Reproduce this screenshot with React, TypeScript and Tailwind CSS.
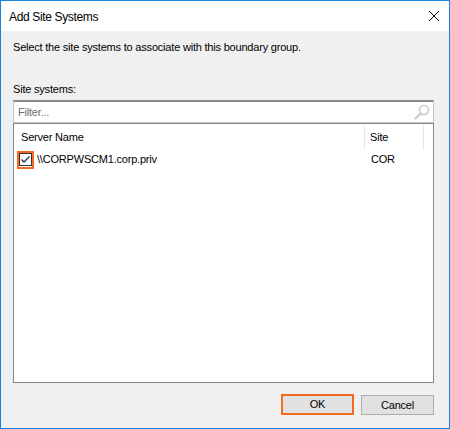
import React from 'react';

const ui = { fontFamily: '"Liberation Sans", Arial, sans-serif' };

const SearchGlyph = () => (
  <svg width="16" height="16" viewBox="0 0 16 16" className="shrink-0">
    <circle cx="10" cy="6" r="4.5" fill="none" stroke="#c8c8c8" strokeWidth="1.5" />
    <line x1="6.7" y1="9.3" x2="1.5" y2="14.5" stroke="#c8c8c8" strokeWidth="2" strokeLinecap="round" />
  </svg>
);

const CloseGlyph = () => (
  <svg width="12" height="12" viewBox="0 0 12 12">
    <path d="M1 1 L11 11 M11 1 L1 11" stroke="#000" strokeWidth="1" fill="none" />
  </svg>
);

export default function App() {
  return (
    <div
      style={ui}
      className="w-[450px] h-[429px] border border-[#1883d7] bg-[#f0f0f0] flex flex-col text-[11px] tracking-[-0.2px] text-black"
    >
      {/* title bar */}
      <div className="h-[30px] bg-white flex items-center justify-between pl-[8px] pr-[9px]">
        <span className="text-[12px] tracking-[-0.35px] leading-none pt-[1px]">Add Site Systems</span>
        <CloseGlyph />
      </div>

      <div className="flex-1 flex flex-col pl-[12px] pr-[15px]">
        <p className="mt-[10px] leading-[13px]">Select the site systems to associate with this boundary group.</p>

        <p className="mt-[29px] leading-[13px]">Site systems:</p>

        {/* filter */}
        <div className="mt-[4px] h-[23px] bg-white border border-[#c4c4c4] border-t-[#8c8c8c] border-t-2 flex items-center pl-[4px] pr-[3px]">
          <span className="flex-1 text-[#6d6d6d]">Filter...</span>
          <SearchGlyph />
        </div>

        {/* list */}
        <div className="h-[260px] bg-white border border-[#828790] flex flex-col">
          <div className="h-[25px] mt-[1px] flex items-stretch">
            <div className="w-[351px] pl-[7px] flex items-center border-r border-[#e5e5e5]">Server Name</div>
            <div className="w-[59px] pl-[5px] flex items-center border-r border-[#e5e5e5]">Site</div>
          </div>
          <div className="h-[19px] flex items-center">
            <div className="ml-[3px] w-[17px] h-[18px] border-2 border-[#f26b21] flex items-center justify-center">
              <div className="w-[13px] h-[13px] border border-[#333] bg-white flex items-center justify-center">
                <svg width="11" height="11" viewBox="0 0 11 11">
                  <path d="M1.5 5.5 L4 8 L9.5 2.5" stroke="#333" strokeWidth="1.4" fill="none" />
                </svg>
              </div>
            </div>
            <span className="w-[334px] pl-[3px]">\\CORPWSCM1.corp.priv</span>
            <span className="pl-[3px]">COR</span>
          </div>
        </div>

        {/* buttons */}
        <div className="mt-[11px] flex justify-end gap-[7px]">
          <div className="w-[73px] h-[21px] border-2 border-[#f26b21] bg-[#e1e1e1] flex items-center justify-center">
            OK
          </div>
          <div className="w-[73px] h-[20px] mt-[1px] border border-[#adadad] bg-[#e1e1e1] flex items-center justify-center">
            Cancel
          </div>
        </div>
      </div>
    </div>
  );
}
